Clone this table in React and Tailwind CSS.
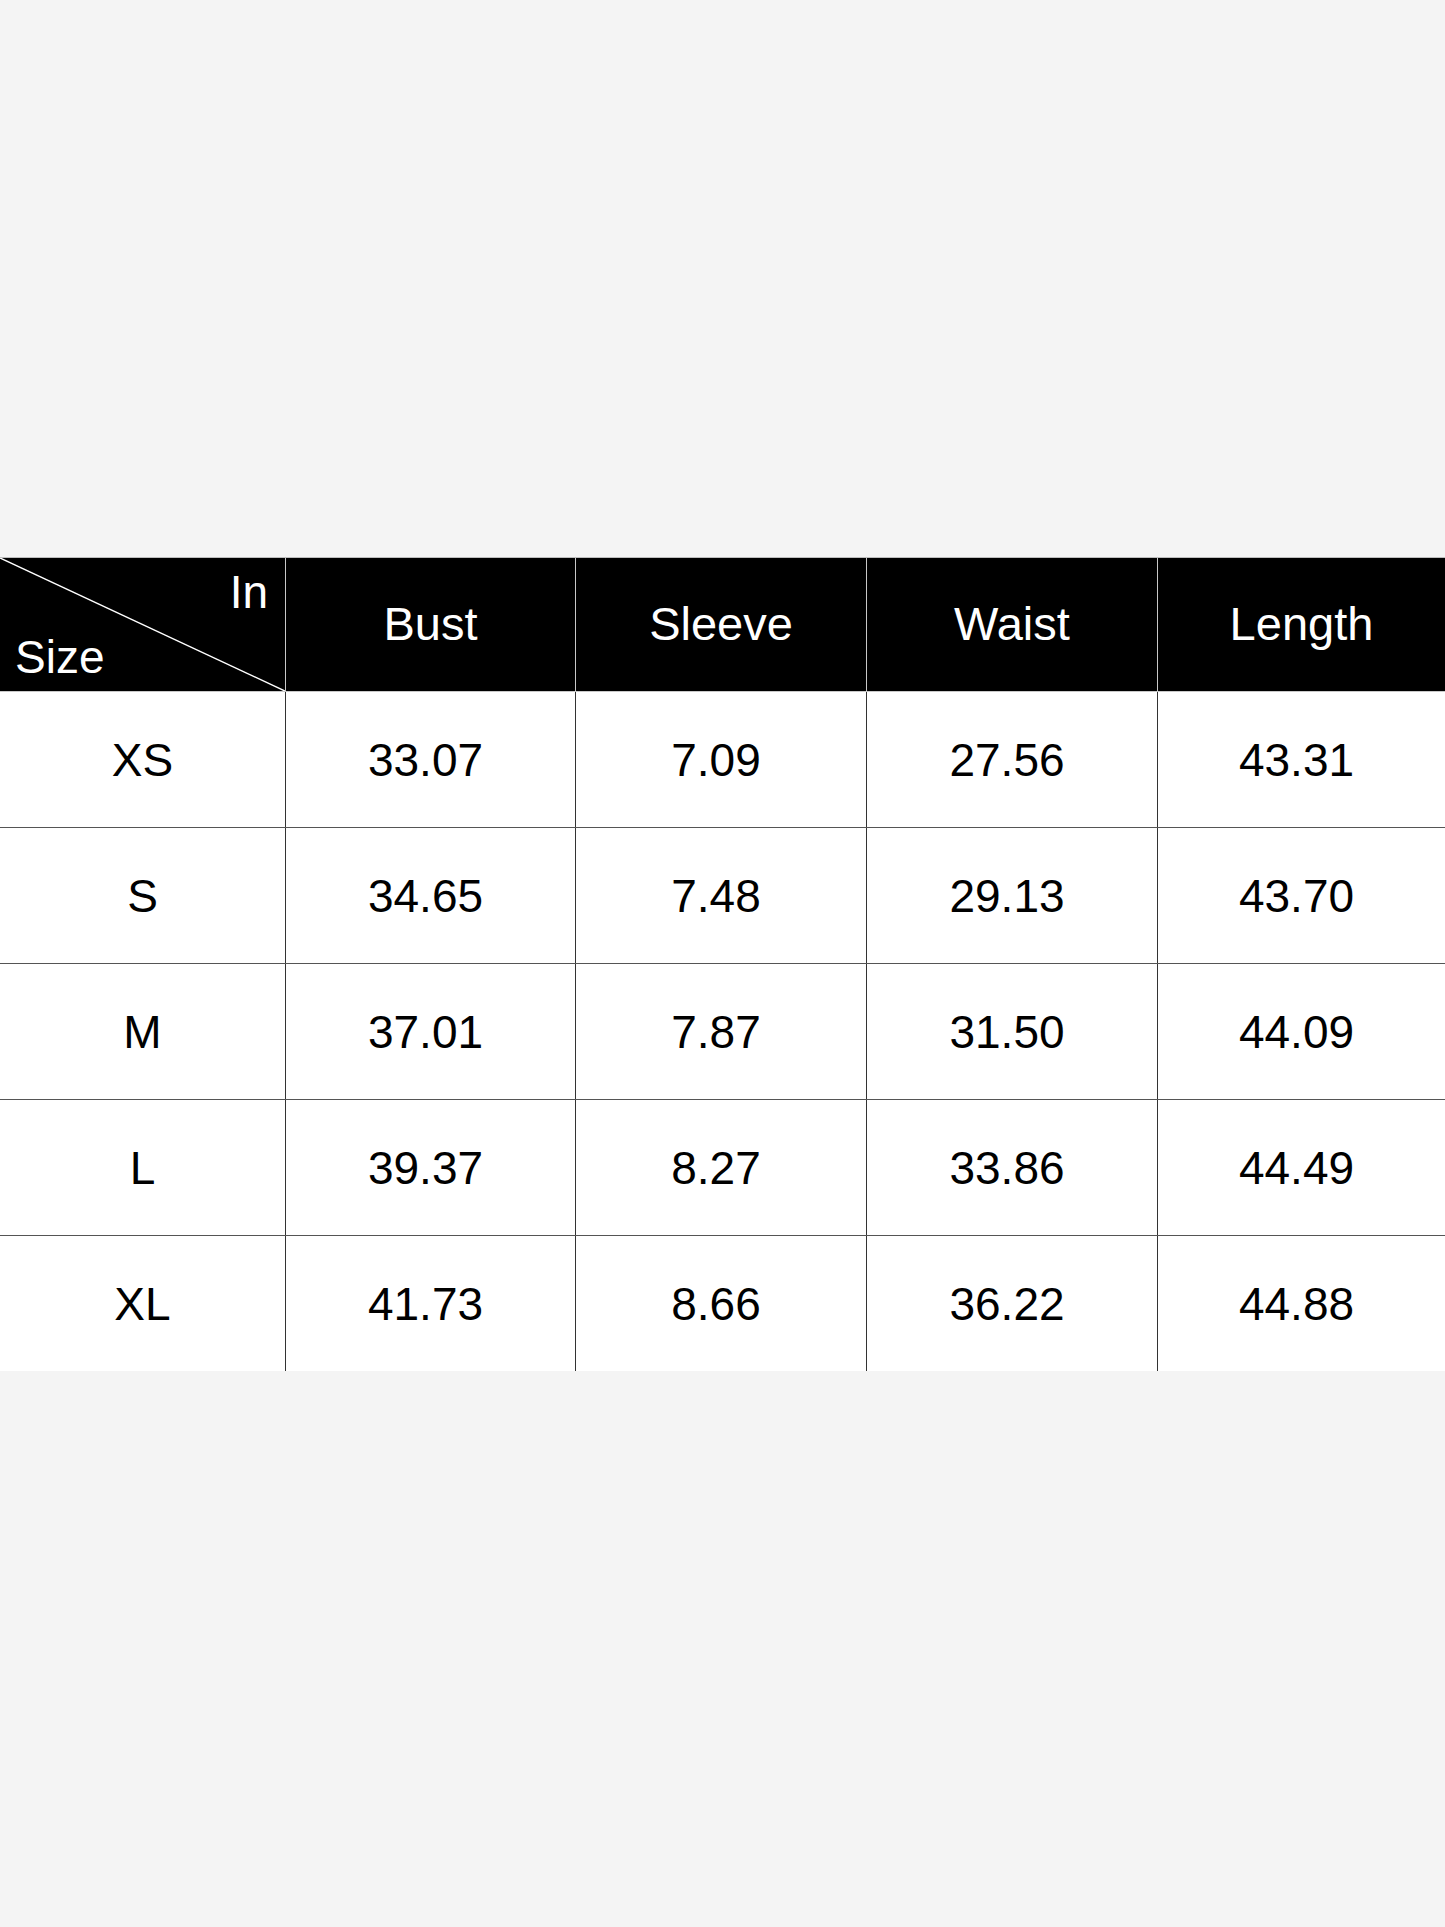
const headers = ['Bust', 'Sleeve', 'Waist', 'Length'];

const rows = [
    ['XS', '33.07', '7.09', '27.56', '43.31'],
    ['S', '34.65', '7.48', '29.13', '43.70'],
    ['M', '37.01', '7.87', '31.50', '44.09'],
    ['L', '39.37', '8.27', '33.86', '44.49'],
    ['XL', '41.73', '8.66', '36.22', '44.88'],
];

export default function App() {
    return (
        <div
            className="flex h-[1927px] w-full items-center bg-[#f4f4f4]"
            style={{ fontFamily: '"Liberation Sans", Arial, sans-serif' }}
        >
            <div className="w-full border-t border-[#bdbdbd]">
                <div className="grid grid-cols-[286px_290px_291px_291px_1fr] bg-black text-white">
                    <div className="relative h-[134px] border-r border-b border-[#c8c8c8]">
                        <svg className="absolute inset-0 h-full w-full" viewBox="0 0 286 134" preserveAspectRatio="none">
                            <line x1="0" y1="0" x2="286" y2="134" stroke="#ffffff" strokeWidth="1.5" />
                        </svg>
                        <span className="absolute right-[17px] top-[11px] text-[46px] leading-none">In</span>
                        <span className="absolute left-[15px] bottom-[11px] text-[46px] leading-none">Size</span>
                    </div>
                    {headers.map((h, i) => (
                        <div
                            key={h}
                            className={`flex h-[134px] items-center justify-center border-b border-[#c8c8c8] text-[47px] ${i < headers.length - 1 ? 'border-r' : ''}`}
                        >
                            {h}
                        </div>
                    ))}
                </div>

                <div className="bg-white text-black">
                    {rows.map((row, r) => (
                        <div
                            key={row[0]}
                            className={`grid grid-cols-[286px_290px_291px_291px_1fr] ${r < rows.length - 1 ? 'border-b border-[#555555]' : ''}`}
                        >
                            {row.map((cell, c) => (
                                <div
                                    key={c}
                                    className={`flex h-[135px] items-center justify-center pt-[3px] text-[46px] ${c > 0 ? 'pr-[10px]' : ''} ${c < row.length - 1 ? 'border-r border-[#333333]' : ''}`}
                                >
                                    {cell}
                                </div>
                            ))}
                        </div>
                    ))}
                </div>
            </div>
        </div>
    );
}
